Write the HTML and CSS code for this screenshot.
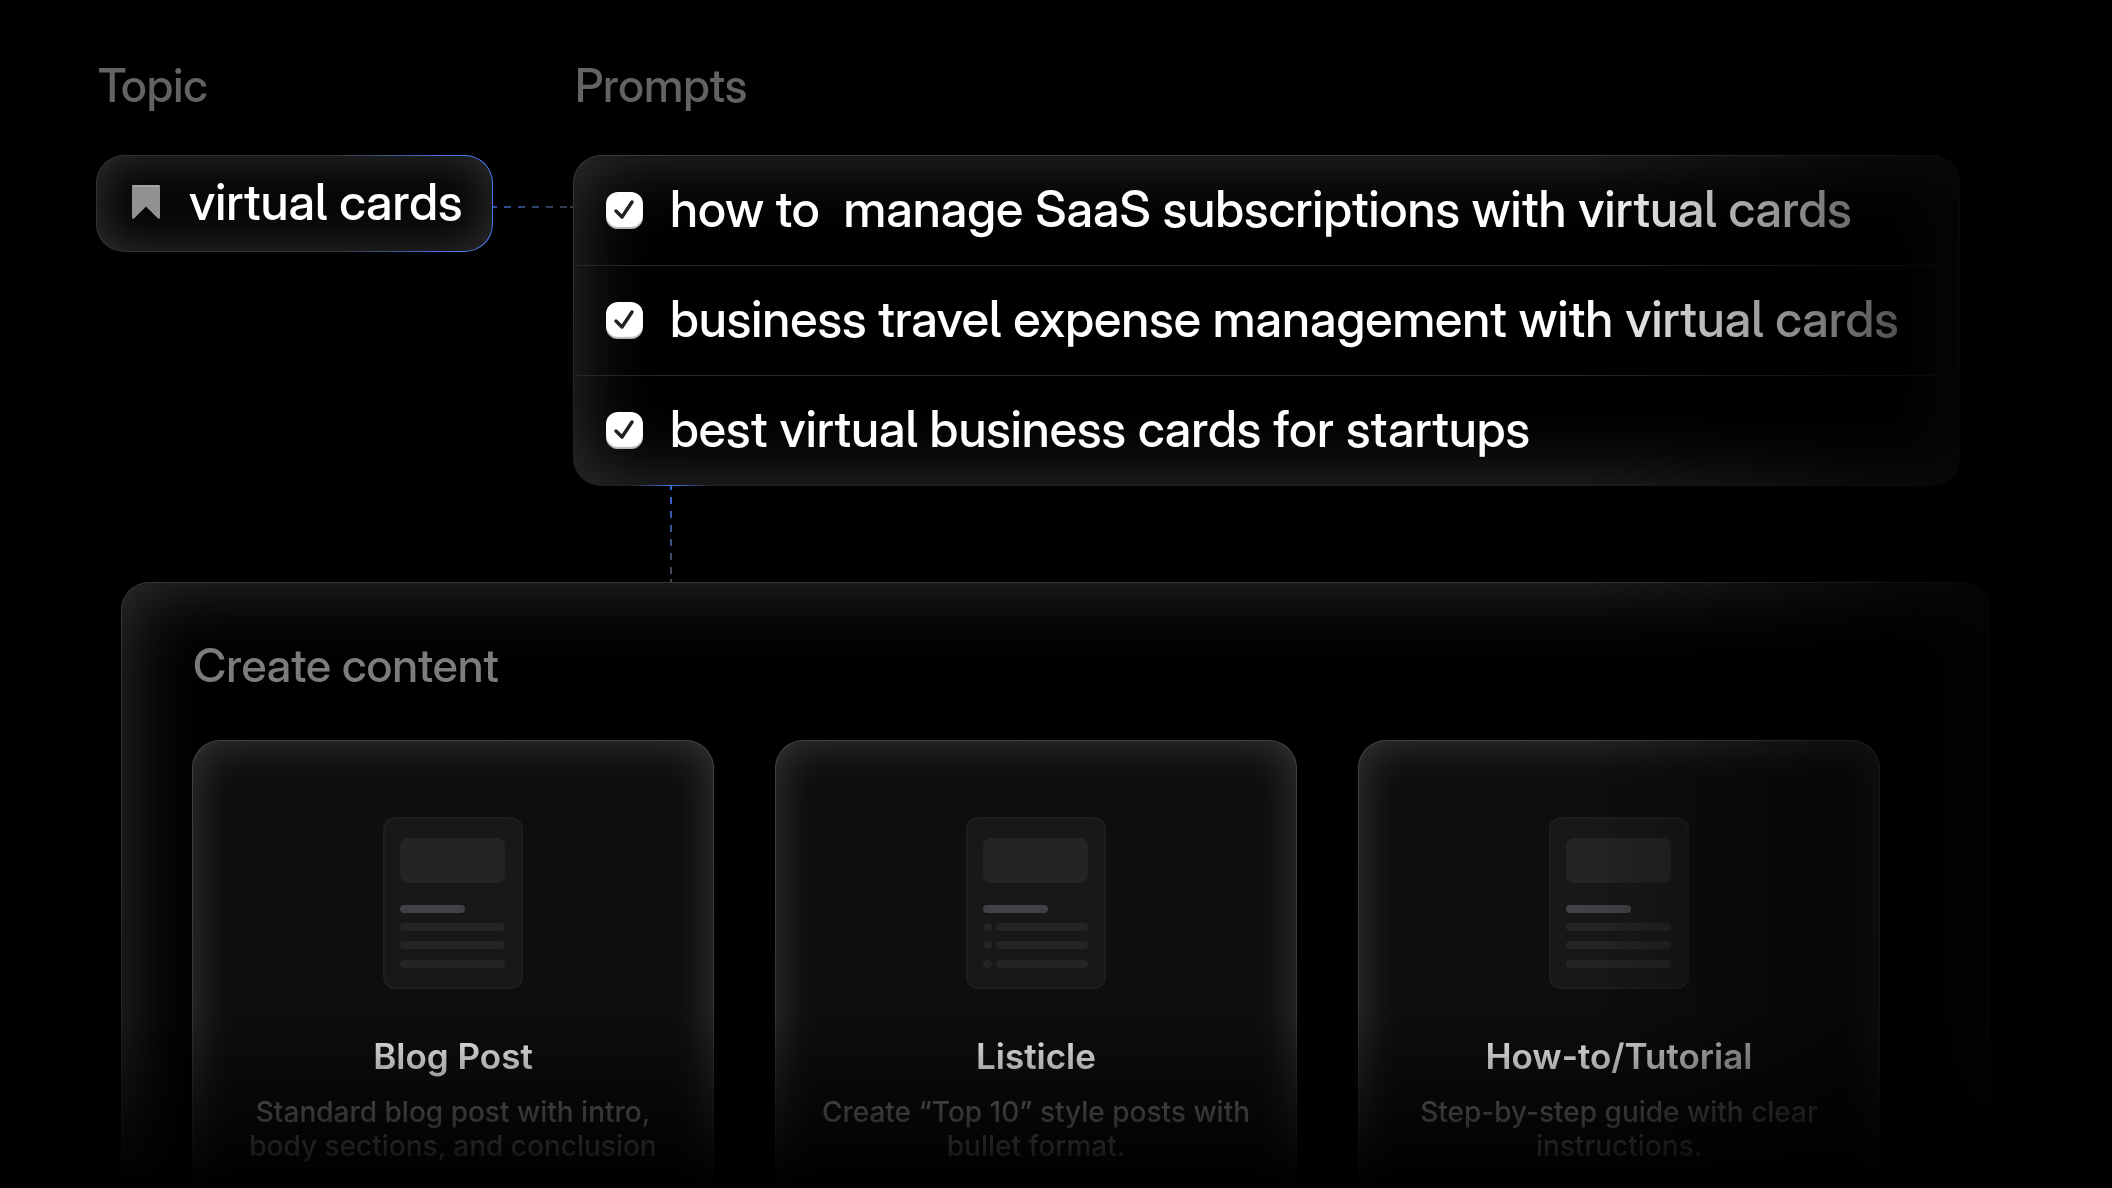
FILE: index.html
```html
<!DOCTYPE html>
<html lang="en">
<head>
<meta charset="utf-8">
<meta name="viewport" content="width=device-width, initial-scale=1">
<title>Prompts and content</title>
<link rel="stylesheet" href="styles.css">
</head>
<body>
<main class="stage">
  <div class="flow">
    <section class="topic">
      <h2 class="label">Topic</h2>
      <div class="topic-row">
        <div class="chip">
          <svg class="chip-icon" viewBox="0 0 28 34" aria-hidden="true">
            <path d="M1 0h26a1 1 0 0 1 1 1v31.500a1.200 1.200 0 0 1-2 1L14 21.500 2 33.500a1.200 1.200 0 0 1-2-1V1a1 1 0 0 1 1-1z" fill="#919191"/>
            <path d="M1 1h26" stroke="#b9b9b9" stroke-width="1"/>
          </svg>
          <span>virtual cards</span>
        </div>
        <div class="link-h"></div>
      </div>
    </section>
    <section class="prompts">
      <h2 class="label">Prompts</h2>
      <div class="panel prompt-panel">
        <label class="prompt"><input class="tick" type="checkbox" checked><span class="prompt-text">how to  manage SaaS subscriptions with virtual cards</span></label>
        <label class="prompt"><input class="tick" type="checkbox" checked><span class="prompt-text">business travel expense management with virtual cards</span></label>
        <label class="prompt"><input class="tick" type="checkbox" checked><span class="prompt-text">best virtual business cards for startups</span></label>
      </div>
      <div class="link-v"></div>
    </section>
  </div>

  <section class="panel create">
    <h2 class="label create-label">Create content</h2>
    <div class="cards">
      <article class="card">
        <svg class="thumb" viewBox="0 0 140 172" aria-hidden="true">
          <rect class="sheet" x="1" y="1" width="138" height="170" rx="11"/>
          <rect class="soft" x="17" y="21" width="105" height="45" rx="8"/>
          <rect class="strong" x="17" y="88" width="65" height="8" rx="4"/>
          <rect class="soft" x="17" y="106" width="105" height="8" rx="4"/>
          <rect class="soft" x="17" y="124" width="105" height="8" rx="4"/>
          <rect class="soft" x="17" y="143" width="105" height="8" rx="4"/>
        </svg>
        <h3 class="card-title">Blog Post</h3>
        <p class="card-text">Standard blog post with intro,<br>body sections, and conclusion</p>
      </article>
      <article class="card">
        <svg class="thumb" viewBox="0 0 140 172" aria-hidden="true">
          <rect class="sheet" x="1" y="1" width="138" height="170" rx="11"/>
          <rect class="soft" x="17" y="21" width="105" height="45" rx="8"/>
          <rect class="strong" x="17" y="88" width="65" height="8" rx="4"/>
          <rect class="soft" x="17" y="106" width="9" height="8" rx="4"/>
          <rect class="soft" x="30" y="106" width="92" height="8" rx="4"/>
          <rect class="soft" x="17" y="124" width="9" height="8" rx="4"/>
          <rect class="soft" x="30" y="124" width="92" height="8" rx="4"/>
          <rect class="soft" x="17" y="143" width="9" height="8" rx="4"/>
          <rect class="soft" x="30" y="143" width="92" height="8" rx="4"/>
        </svg>
        <h3 class="card-title">Listicle</h3>
        <p class="card-text">Create “Top 10” style posts with<br>bullet format.</p>
      </article>
      <article class="card">
        <svg class="thumb" viewBox="0 0 140 172" aria-hidden="true">
          <rect class="sheet" x="1" y="1" width="138" height="170" rx="11"/>
          <rect class="soft" x="17" y="21" width="105" height="45" rx="8"/>
          <rect class="strong" x="17" y="88" width="65" height="8" rx="4"/>
          <rect class="soft" x="17" y="106" width="105" height="8" rx="4"/>
          <rect class="soft" x="17" y="124" width="105" height="8" rx="4"/>
          <rect class="soft" x="17" y="143" width="105" height="8" rx="4"/>
        </svg>
        <h3 class="card-title">How-to/Tutorial</h3>
        <p class="card-text">Step-by-step guide with clear<br>instructions.</p>
      </article>
    </div>
  </section>
</main>
</body>
</html>
```
FILE: styles.css
```css
* {
  box-sizing: border-box;
}

body {
  margin: 0;
  background: #000;
  color: #fff;
  font-family: Inter, "Liberation Sans", sans-serif;
}

h2, h3, p {
  margin: 0;
}

/* The whole scene fades out to the right and at the bottom of the window */
.stage {
  height: 100vh;
  overflow: hidden;
  padding-top: 57px;
  mask-image:
    linear-gradient(90deg, #000 75%, transparent 97%),
    linear-gradient(180deg, #000 85%, transparent 100%);
  mask-composite: intersect;
}

.flow {
  display: grid;
  grid-template-columns: 477px 1fr;
  padding: 0 152px 0 96px;
}

.label {
  padding-left: 2px;
  font-family: "Inter Display", Inter, "Liberation Sans", sans-serif;
  font-size: 46px;
  line-height: 56px;
  font-weight: 500;
  color: #636363;
}

.topic-row {
  display: flex;
  align-items: center;
  margin-top: 42px;
}

.chip {
  display: flex;
  flex: 1;
  align-items: center;
  gap: 29px;
  height: 97px;
  padding: 0 0 4px 35px;
  border: 1px solid transparent;
  border-radius: 28px;
  background:
    linear-gradient(#060606, #060606) padding-box,
    linear-gradient(90deg, #333 60%, #4a7af0 90%) border-box;
  box-shadow: inset 0 0 48px rgba(255, 255, 255, 0.18);
  white-space: nowrap;
}

.chip,
.prompt-text {
  font-family: "Inter Display", Inter, "Liberation Sans", sans-serif;
  font-feature-settings: "cv05";
  font-size: 50px;
  line-height: 60px;
  font-weight: 500;
}

.chip-icon {
  width: 28px;
  height: 34px;
}

.link-h {
  width: 80px;
  height: 2px;
  margin-top: 7px;
  background: linear-gradient(90deg, #2d4f9e, #333844);
  mask-image: repeating-linear-gradient(90deg, #000 0 7px, transparent 7px 14px);
  mask-position: -3px 0;
}

.panel {
  border: 1px solid transparent;
  border-radius: 28px;
  background:
    linear-gradient(#000, #000) padding-box,
    linear-gradient(#383838, #1e1e1e) border-box;
  box-shadow: inset 0 0 80px rgba(255, 255, 255, 0.2);
}

.prompt-panel {
  margin-top: 42px;
  background:
    linear-gradient(#000, #000) padding-box,
    linear-gradient(90deg, transparent, #4a7af0, transparent) 58px 100% / 80px 2px no-repeat border-box,
    linear-gradient(#383838, #1e1e1e) border-box;
}

.prompt {
  display: flex;
  align-items: center;
  gap: 27px;
  height: 109px;
  padding-left: 32px;
}

.prompt + .prompt {
  height: 110px;
  border-top: 1px solid #262626;
}

.tick {
  appearance: none;
  flex: none;
  width: 37px;
  height: 37px;
  margin: 0;
  border-radius: 12px;
  background: #fff url("data:image/svg+xml,%3Csvg xmlns='http://www.w3.org/2000/svg' viewBox='0 0 37 37'%3E%3Cpath d='M10 19l6 6 10-15' fill='none' stroke='%23222' stroke-width='3.500' stroke-linecap='round' stroke-linejoin='round'/%3E%3C/svg%3E");
  box-shadow: inset 0 -2px 1px #b5b5b5;
}

.prompt-text {
  padding-bottom: 4px;
  white-space: pre;
}

.link-v {
  width: 2px;
  height: 96px;
  margin-left: 97px;
  background: linear-gradient(#3565d8, #444);
  mask-image: repeating-linear-gradient(#000 0 7px, transparent 7px 14px);
  mask-position: 0 -3px;
}

.create {
  margin: 0 122px 0 121px;
  padding: 54px 109px 0 70px;
}

.create-label {
  padding-left: 1px;
  color: #7c7c7c;
}

.cards {
  display: grid;
  grid-template-columns: repeat(3, 1fr);
  gap: 61px;
  margin-top: 47px;
}

.card {
  display: flex;
  flex-direction: column;
  align-items: center;
  padding: 76px 24px 60px;
  border: 1px solid transparent;
  border-radius: 28px;
  background:
    linear-gradient(#0e0e10, #0e0e10) padding-box,
    linear-gradient(#444, #2c2c2c) border-box;
  box-shadow: inset 0 0 44px rgba(255, 255, 255, 0.18);
  text-align: center;
}

.thumb {
  width: 140px;
  height: 172px;
}

.sheet {
  fill: #18181a;
  stroke: #1e1e1e;
  stroke-width: 2;
}

.soft {
  fill: #242427;
}

.strong {
  fill: #424246;
}

.card-title {
  margin-top: 46px;
  font-size: 35px;
  line-height: 42px;
  font-weight: 600;
}

.card-text {
  margin-top: 18px;
  font-size: 28px;
  line-height: 34px;
  font-weight: 500;
  color: #808080;
  white-space: nowrap;
}
```
